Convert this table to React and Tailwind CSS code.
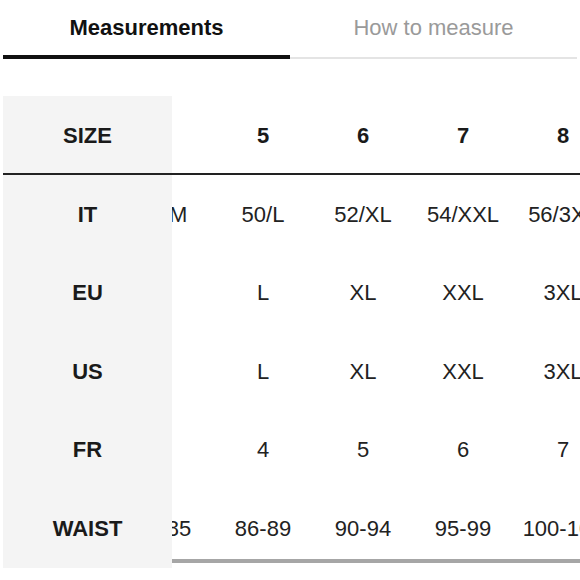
import React from "react";

const cols = [
  { size: "4", it: "48/M", eu: "M", us: "M", fr: "3", waist: "81-85" },
  { size: "5", it: "50/L", eu: "L", us: "L", fr: "4", waist: "86-89" },
  { size: "6", it: "52/XL", eu: "XL", us: "XL", fr: "5", waist: "90-94" },
  { size: "7", it: "54/XXL", eu: "XXL", us: "XXL", fr: "6", waist: "95-99" },
  { size: "8", it: "56/3XL", eu: "3XL", us: "3XL", fr: "7", waist: "100-104" },
  { size: "9", it: "58/4XL", eu: "4XL", us: "4XL", fr: "8", waist: "105-109" },
];

const rows = [
  { label: "IT", key: "it" },
  { label: "EU", key: "eu" },
  { label: "US", key: "us" },
  { label: "FR", key: "fr" },
  { label: "WAIST", key: "waist" },
];

export default function App() {
  return (
    <div className="w-[580px] h-[580px] overflow-hidden bg-white pl-[3px] font-['Liberation_Sans',Arial,sans-serif] text-[22px]">
      {/* Tabs */}
      <div className="flex w-[574px]">
        <div className="flex-1 h-[59px] flex items-center justify-center border-b-[4px] border-[#111] font-bold text-[#111]">
          Measurements
        </div>
        <div className="flex-1 h-[59px] flex items-center justify-center border-b-2 border-[#e4e4e4] pb-[2px] text-[#9a9a9a]">
          How to measure
        </div>
      </div>

      {/* Table */}
      <div className="mt-[37px] flex">
        {/* Sticky first column */}
        <div className="w-[169px] shrink-0 bg-[#f4f4f4] flex flex-col">
          <div className="h-[79px] flex items-center justify-center border-b-2 border-[#222] font-bold text-[#1a1a1a] pt-[1px]">
            SIZE
          </div>
          {rows.map((r) => (
            <div
              key={r.key}
              className="h-[78.5px] flex items-center justify-center font-bold text-[#1a1a1a]"
            >
              {r.label}
            </div>
          ))}
        </div>

        {/* Scrolled area */}
        <div className="relative flex-1 overflow-hidden">
          <div className="flex border-b-2 border-[#222] h-[79px]">
            <div className="flex ml-[-59px]">
              {cols.map((c) => (
                <div
                  key={c.size}
                  className="w-[100px] shrink-0 flex items-center justify-center font-bold text-[#1a1a1a] pt-[1px]"
                >
                  {c.size}
                </div>
              ))}
            </div>
          </div>
          {rows.map((r) => (
            <div key={r.key} className="flex h-[78.5px]">
              <div className="flex ml-[-59px]">
                {cols.map((c) => (
                  <div
                    key={c.size}
                    className="w-[100px] shrink-0 flex items-center justify-center whitespace-nowrap text-[#222]"
                  >
                    {c[r.key]}
                  </div>
                ))}
              </div>
            </div>
          ))}
          {/* overlay scrollbar */}
          <div className="absolute left-0 right-0 bottom-[5px] h-[4px] bg-[#a6a6a6]" />
        </div>
      </div>
    </div>
  );
}
